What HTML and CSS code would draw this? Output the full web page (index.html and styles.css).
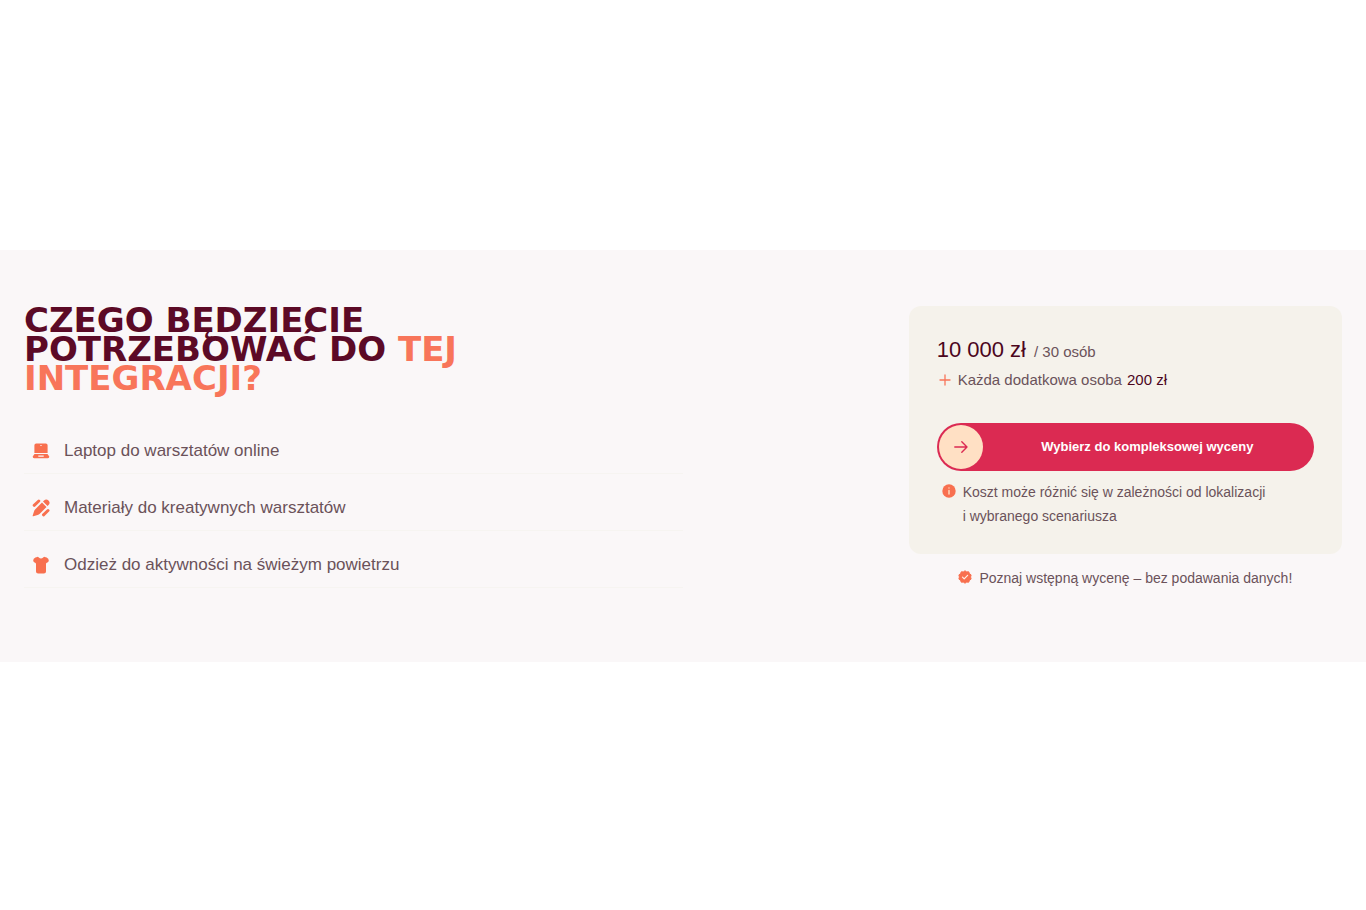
FILE: index.html
```html
<!DOCTYPE html>
<html lang="pl">
<head>
<meta charset="utf-8">
<meta name="viewport" content="width=device-width, initial-scale=1">
<title>Czego będziecie potrzebować do tej integracji?</title>
<link rel="stylesheet" href="styles.css">
</head>
<body>
<main class="page">
  <section class="requirements">
    <div class="needs">
      <h2 class="needs-title">Czego będziecie<br>potrzebować do <span class="accent">tej<br>integracji?</span></h2>
      <ul class="needs-list">
        <li class="need">
          <svg class="need-icon" viewBox="0 0 18 18" aria-hidden="true"><path fill="currentColor" fill-rule="evenodd" d="M4.200 1.500h9.600Q15.600 1.500 15.600 3.300V11H2.400V3.300Q2.400 1.500 4.200 1.500ZM8.400 3v1h1.200V3ZM2.500 12H15.500L17.300 14.500Q17.400 16.200 15.800 16.200H2.200Q.6 16.200.7 14.500ZM6.300 13.600v1.200h5.400v-1.200Z"/></svg>
          <span>Laptop do warsztatów online</span>
        </li>
        <li class="need">
          <svg class="need-icon" viewBox="0 0 18 18" aria-hidden="true"><g fill="currentColor"><path d="M3.300 10.200 10 3.500 14.500 8 7.800 14.700Q6.900 15.600 5.600 16L1.300 17.300Q.5 17.400.7 16.600L2 12.400Q2.300 11.100 3.300 10.200Z"/><path d="M11 2.500 12 1.500a3.180 3.180 0 0 1 4.500 4.500L15.500 7Z"/></g><g fill="none" stroke="currentColor" stroke-width="3" stroke-linecap="round"><path d="M2.200 6.300 6.800 2"/><path d="M11.500 15.800 16 11.500"/></g></svg>
          <span>Materiały do kreatywnych warsztatów</span>
        </li>
        <li class="need">
          <svg class="need-icon" viewBox="0 0 18 18" aria-hidden="true"><path fill="currentColor" d="M5.200.9Q6.200.7 6.800 1.500 9 3.500 11.200 1.500 11.800.7 12.800.9L14.600 1.500Q16.800 2.500 16.800 4.500 16.700 6.200 15.400 6.500 14 6.700 14 8V15.500Q14 17.600 11.900 17.600H6.100Q4 17.600 4 15.500V8Q4 6.700 2.600 6.500 1.300 6.200 1.200 4.500 1.200 2.500 3.400 1.500Z"/></svg>
          <span>Odzież do aktywności na świeżym powietrzu</span>
        </li>
      </ul>
    </div>
    <aside class="pricing">
      <div class="card">
        <p class="price"><strong class="price-total">10 000 zł</strong><span class="price-group">/ 30 osób</span></p>
        <p class="extra">
          <svg class="extra-icon" viewBox="0 0 16 16" aria-hidden="true"><path fill="none" stroke="currentColor" stroke-width="1.300" stroke-linecap="round" d="M8 3v10M3 8h10"/></svg>
          <span>Każda dodatkowa osoba</span>
          <strong class="extra-price">200 zł</strong>
        </p>
        <button class="cta" type="button">
          <span class="cta-knob"><svg class="cta-arrow" viewBox="0 0 16 16" aria-hidden="true"><path fill="none" stroke="currentColor" stroke-width="1.400" stroke-linecap="round" stroke-linejoin="round" d="M1.800 8H14M8.800 2.800 14 8 8.800 13.200"/></svg></span>
          <span class="cta-label">Wybierz do kompleksowej wyceny</span>
        </button>
        <p class="note">
          <svg class="note-icon" viewBox="0 0 14 14" aria-hidden="true"><circle cx="7" cy="7" r="6.700" fill="currentColor"/><path stroke="#ffe0c4" stroke-width="1.400" stroke-linecap="round" d="M7 6.500V10M7 4v.1"/></svg>
          <span>Koszt może różnić się w zależności od lokalizacji i&nbsp;wybranego scenariusza</span>
        </p>
      </div>
      <p class="promise">
        <svg class="note-icon" viewBox="0 0 14 14" aria-hidden="true"><path fill="currentColor" stroke="currentColor" stroke-linejoin="round" d="M7 .8 8.700 1.900 10.700 1.800 11.500 3.700 13.100 4.900 12.600 7 13.100 9.100 11.500 10.300 10.700 12.200 8.700 12.100 7 13.200 5.300 12.100 3.300 12.200 2.500 10.300.9 9.100 1.400 7 .9 4.900 2.500 3.700 3.300 1.800 5.300 1.900Z"/><path fill="none" stroke="#fff0e6" stroke-width="1.200" stroke-linecap="round" stroke-linejoin="round" d="M4.500 7.200 6.200 8.900 9.600 5.300"/></svg>
        <span>Poznaj wstępną wycenę – bez podawania danych!</span>
      </p>
    </aside>
  </section>
</main>
</body>
</html>
```

FILE: styles.css
```css
* {
  box-sizing: border-box;
}

body,
h2,
p,
ul {
  margin: 0;
  padding: 0;
}

body {
  background: #fff;
  color: #6b525a;
  font-family: "Liberation Sans", Arial, sans-serif;
}

.page {
  display: flex;
  flex-direction: column;
  justify-content: center;
  min-height: 100vh;
  padding-top: 2px;
}

.requirements {
  display: flex;
  justify-content: space-between;
  align-items: flex-start;
  gap: 24px;
  padding: 56px 24px 72px;
  background: #faf7f8;
}

.needs {
  width: 50%;
}

.needs-title {
  color: #5c0a26;
  font-family: "DejaVu Sans", sans-serif;
  font-size: 34px;
  font-weight: 700;
  line-height: 29px;
  text-transform: uppercase;
  white-space: nowrap;
}

.accent {
  color: #f8755a;
}

.needs-list {
  margin-top: 24px;
  list-style: none;
}

.need {
  display: flex;
  align-items: center;
  gap: 14px;
  height: 57px;
  padding: 12px 8px 0;
  border-bottom: 1px solid #f6f4f1;
  font-size: 17px;
  line-height: 24px;
}

.need-icon {
  flex: none;
  width: 18px;
  height: 18px;
  color: #f8704f;
}

.pricing {
  width: calc(33.333% - 6px);
}

.card {
  padding: 29px 28px 26px;
  border-radius: 12px;
  background: #f5f2eb;
}

.price {
  display: flex;
  align-items: baseline;
  gap: 8px;
  line-height: 30px;
}

.price-total {
  color: #4c061d;
  font-size: 22px;
  font-weight: 400;
}

.price-group {
  font-size: 15px;
}

.extra {
  display: flex;
  align-items: center;
  gap: 5px;
  font-size: 15px;
  line-height: 26px;
}

.extra-icon {
  width: 16px;
  height: 16px;
  color: #f8755a;
}

.extra-price {
  color: #4c061d;
  font-weight: 400;
}

.cta {
  display: flex;
  align-items: center;
  width: 100%;
  height: 48px;
  margin-top: 30px;
  padding: 2px;
  border: 0;
  border-radius: 24px;
  background: #db2a52;
  color: #fff;
  font: 700 13px/20px "Liberation Sans", Arial, sans-serif;
  cursor: pointer;
}

.cta-knob {
  display: flex;
  flex: none;
  align-items: center;
  justify-content: center;
  width: 44px;
  height: 44px;
  border-radius: 50%;
  background: #ffe0c4;
  color: #db2a52;
}

.cta-arrow {
  width: 16px;
  height: 16px;
}

.cta-label {
  flex: 1;
  text-align: center;
}

.note {
  display: flex;
  gap: 7px;
  margin-top: 9px;
  padding: 0 40px 0 5px;
  font-size: 14px;
  line-height: 24px;
}

.note-icon {
  flex: none;
  width: 14px;
  height: 14px;
  margin-top: 4px;
  color: #f8704f;
}

.promise {
  display: flex;
  justify-content: center;
  gap: 7px;
  margin-top: 12px;
  font-size: 14px;
  line-height: 24px;
}
```
